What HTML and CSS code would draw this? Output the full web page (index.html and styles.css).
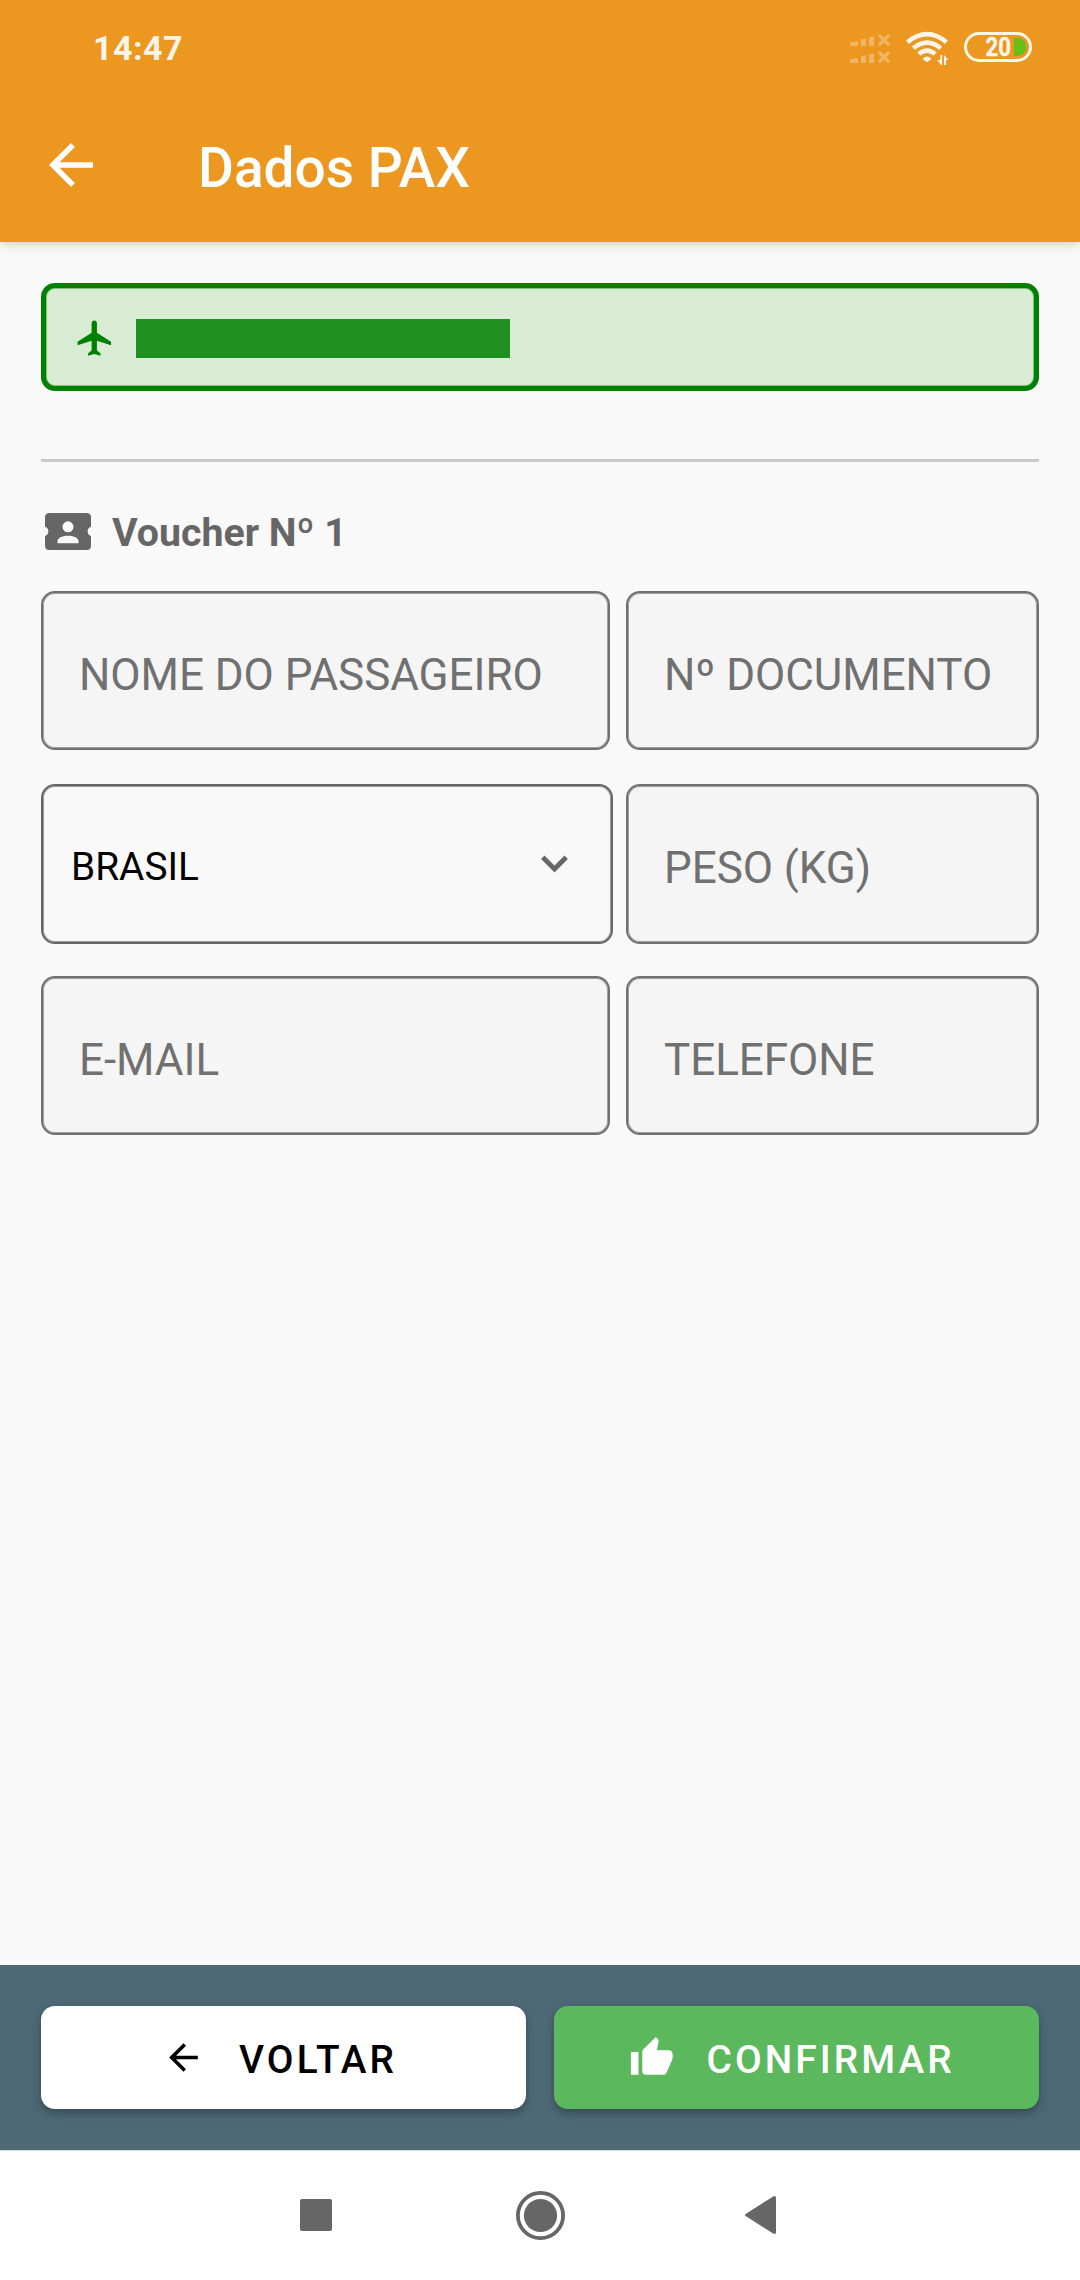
FILE: index.html
```html
<!DOCTYPE html>
<html lang="pt-BR">
<head>
<meta charset="utf-8">
<title>Dados PAX</title>
<link rel="stylesheet" href="styles.css">
</head>
<body>
<div class="screen">
  <header class="header">
    <div class="status">
      <span class="clock">14:47</span>
      <svg class="status-icons" width="184" height="36" viewBox="850 30 184 36">
        <g fill="#fff" opacity=".3">
          <path id="signal" d="M850 43.200q0-.8.8-1l6.200-1q1-.1 1 .8v4h-7q-1 0-1-1zM861 40.200q0-.8.8-1l3.400-.6q.8-.1.8.8V45q0 1-1 1h-3q-1 0-1-1zM869 38.200q0-.8.8-1l3.400-.6q.8-.1.8.8V45q0 1-1 1h-3q-1 0-1-1z"/>
          <use href="#signal" y="17"/>
        </g>
        <path d="M880 36l8.200 8.200M888.200 36l-8.200 8.200M880 53l8.200 8.200M888.200 53l-8.200 8.200" stroke="#fff" stroke-width="3.300" stroke-linecap="round" opacity=".3"/>
        <g fill="none" stroke="#fff" stroke-width="4.600" opacity=".9">
          <path d="M907.500 42.200q19.500-16 39 0"/>
          <path d="M913.300 48.200q13.700-11.200 27.400 0"/>
          <path d="M918.800 54.100q8.200-7 16.400 0"/>
        </g>
        <path d="M923 58.300q4-3.400 8 0 .6.500.1 1l-3.300 2.500q-.8.600-1.600 0l-3.300-2.500q-.5-.5.1-1z" fill="#fff" opacity=".9"/>
        <path d="M937 60h3.300V55h1.900v10h-1zM944 65V55l4.500 5h-2.500v5z" fill="#fff" opacity=".9"/>
        <rect x="965.500" y="33.500" width="65" height="27" rx="13.500" fill="none" stroke="#fff" stroke-width="3" opacity=".9"/>
        <text class="battery-level" x="985.500" y="56" textLength="25.500" lengthAdjust="spacingAndGlyphs">20</text>
        <path d="M1014 38h3.500a9 9 0 0 1 0 18H1014z" fill="#66c018"/>
      </svg>
    </div>
    <div class="toolbar">
      <svg class="back" width="66" height="66" viewBox="0 0 24 24"><path d="M20 11H7.830l5.590-5.590L12 4l-8 8 8 8 1.410-1.410L7.830 13H20v-2z"/></svg>
      <h1 class="title">Dados PAX</h1>
    </div>
  </header>

  <main class="content">
    <div class="flight">
      <svg width="42.300" height="42.300" viewBox="0 0 24 24"><path d="M21 16v-2l-8-5V3.500c0-.83-.67-1.500-1.500-1.500S10 2.670 10 3.500V9l-8 5v2l8-2.500V19l-2 1.500V22l3.500-1 3.500 1v-1.500L13 19v-5.500l8 2.500z"/></svg>
      <span class="redacted"></span>
    </div>
    <hr class="divider">
    <h2 class="voucher">
      <svg width="46" height="37" viewBox="0 0 46 37"><path fill-rule="evenodd" d="M4.500 0h37Q46 0 46 4.500v9.200a4.900 4.900 0 0 0 0 9.300v9.500q0 4.500-4.500 4.500h-37Q0 37 0 32.500V23a4.900 4.900 0 0 0 0-9.300V4.500Q0 0 4.500 0zM23 8.300a5.500 5.500 0 1 0 0 11 5.500 5.500 0 1 0 0-11zM12.500 30.200h21v-2.200c0-3.500-6-5.200-10.500-5.200s-10.500 1.700-10.500 5.200z"/></svg>
      <span>Voucher Nº 1</span>
    </h2>
    <form class="form">
      <div class="row first"><div class="field wide">NOME DO PASSAGEIRO</div><div class="field">Nº DOCUMENTO</div></div>
      <div class="row second">
        <div class="select"><span>BRASIL</span>
          <svg width="27" height="18" viewBox="0 0 27 18"><path d="M1.800 2.300L13.500 14l11.700-11.700" fill="none" stroke="#666" stroke-width="4.800"/></svg>
        </div>
        <div class="field">PESO (KG)</div>
      </div>
      <div class="row"><div class="field wide">E-MAIL</div><div class="field">TELEFONE</div></div>
    </form>
  </main>

  <footer class="actions">
    <div class="button back-button">
      <svg width="43" height="43" viewBox="0 0 24 24"><path d="M20 11H7.830l5.590-5.590L12 4l-8 8 8 8 1.410-1.410L7.830 13H20v-2z"/></svg>
      <span>VOLTAR</span>
    </div>
    <div class="button confirm-button">
      <svg width="45.500" height="45.500" viewBox="0 0 24 24"><path d="M23 10C23 8.890 22.100 8 21 8H14.680L15.640 3.430C15.660 3.330 15.670 3.220 15.670 3.110C15.670 2.700 15.500 2.320 15.230 2.050L14.170 1L7.590 7.580C7.220 7.950 7 8.450 7 9V19A2 2 0 0 0 9 21H18C18.830 21 19.540 20.500 19.840 19.780L22.860 12.730C22.950 12.500 23 12.260 23 12V10M1 21H5V9H1V21Z"/></svg>
      <span>CONFIRMAR</span>
    </div>
  </footer>
  <nav class="nav">
    <svg width="32" height="32" viewBox="0 0 32 32"><rect width="32" height="32" rx="2"/></svg>
    <svg width="50" height="50" viewBox="0 0 50 50"><circle cx="25.500" cy="25.500" r="22.600" fill="none" stroke="#666" stroke-width="3.800"/><circle cx="25.500" cy="25.500" r="16.600"/></svg>
    <svg width="31" height="38" viewBox="0 0 31 38"><path d="M28.200.5Q31-.8 31 2v34q0 2.800-2.800 1.500L1 20.300q-2-1.300 0-2.600z"/></svg>
  </nav>
</div>
</body>
</html>
```
FILE: styles.css
```css
* { box-sizing: border-box; }
body { margin: 0; background: #f9f9f9; font-family: Roboto, "Liberation Sans", sans-serif; }
svg { display: block; flex: none; }
.screen { width: 1080px; height: 2280px; display: flex; flex-direction: column; }

.header { height: 242px; flex: none; background: #ec971f; color: #fff; box-shadow: 0 2px 10px rgba(0, 0, 0, .18); }
.status { height: 96px; display: flex; justify-content: space-between; align-items: center; padding: 0 46px 0 93px; }
.clock { font-size: 34px; font-weight: 700; line-height: 40px; opacity: .9; letter-spacing: .5px; }
.battery-level { font-size: 25px; font-weight: 700; fill: #fff; stroke: #fff; stroke-width: .4px; opacity: .9; }
.toolbar { height: 146px; display: flex; align-items: center; padding: 0 38px 8px; }
.back { fill: #fff; }
.title { margin: 6px 0 0 94px; font-size: 55px; font-weight: 500; line-height: 64px; white-space: nowrap; }

.content { flex: 1; padding: 41px 41px 0; }
.flight { height: 108px; display: flex; align-items: center; gap: 20px; padding-left: 28px; border: 5px solid #008000; border-radius: 14px; background: #d8ecd3; box-shadow: inset 0 0 0 1px rgba(0, 128, 0, .4); }
.flight svg { fill: #008000; margin-top: 3px; }
.redacted { width: 374px; height: 39px; margin-top: 3px; background: #209020; }
.divider { height: 3px; margin: 68px 0 0; border: 0; background: #cacaca; }
.voucher { display: flex; align-items: center; gap: 21px; height: 48px; margin: 46px 0 0; padding-left: 4px; color: #666; fill: #666; font-size: 39.300px; font-weight: 700; line-height: 46px; }
.voucher svg { margin-top: -1px; }
.voucher span { margin-top: 2px; }

.form { margin-top: 35px; }
.row { display: flex; justify-content: space-between; }
.first { margin-bottom: 34px; }
.second { margin-bottom: 32px; }
.field, .select { height: 159px; width: 413px; display: flex; align-items: center; border: 2px solid #707070; border-radius: 14px; }
.field { background: #f5f5f5; box-shadow: inset 0 0 0 1px rgba(112, 112, 112, .65); color: #707070; font-size: 44px; line-height: 52px; padding: 8px 0 0 36px; white-space: nowrap; letter-spacing: -.05px; }
.wide { width: 569px; }
.second .field, .select { height: 160px; }
.select { width: 572px; justify-content: space-between; padding: 6px 43px 0 28px; border-color: #666; box-shadow: inset 0 0 0 1px rgba(102, 102, 102, .65); color: #000; font-size: 38.800px; line-height: 46px; }
.select span { margin-top: -1px; }
.select svg { margin-top: -6px; }

.actions { height: 185px; flex: none; display: flex; gap: 28px; padding: 41px 41px 0; background: #4d6976; }
.button { width: 485px; height: 103px; display: flex; align-items: center; border-radius: 14px; box-shadow: 0 4px 8px rgba(0, 0, 0, .3); font-size: 38.800px; font-weight: 500; line-height: 46px; letter-spacing: 3.050px; }
.button span { margin-top: 4px; }
.back-button { padding-left: 121px; gap: 34px; background: #fff; color: #000; fill: #000; }
.confirm-button { padding-left: 74.500px; gap: 32.500px; background: #5cb85c; color: #fff; fill: #fff; }
.nav { height: 130px; flex: none; display: flex; align-items: center; padding: 0 0 1px 300px; border-top: 1px solid #dcdcdc; background: #fff; fill: #666; }
.nav svg + svg { margin-left: 183px; }
.nav svg:last-child { margin-left: 180px; }
```
